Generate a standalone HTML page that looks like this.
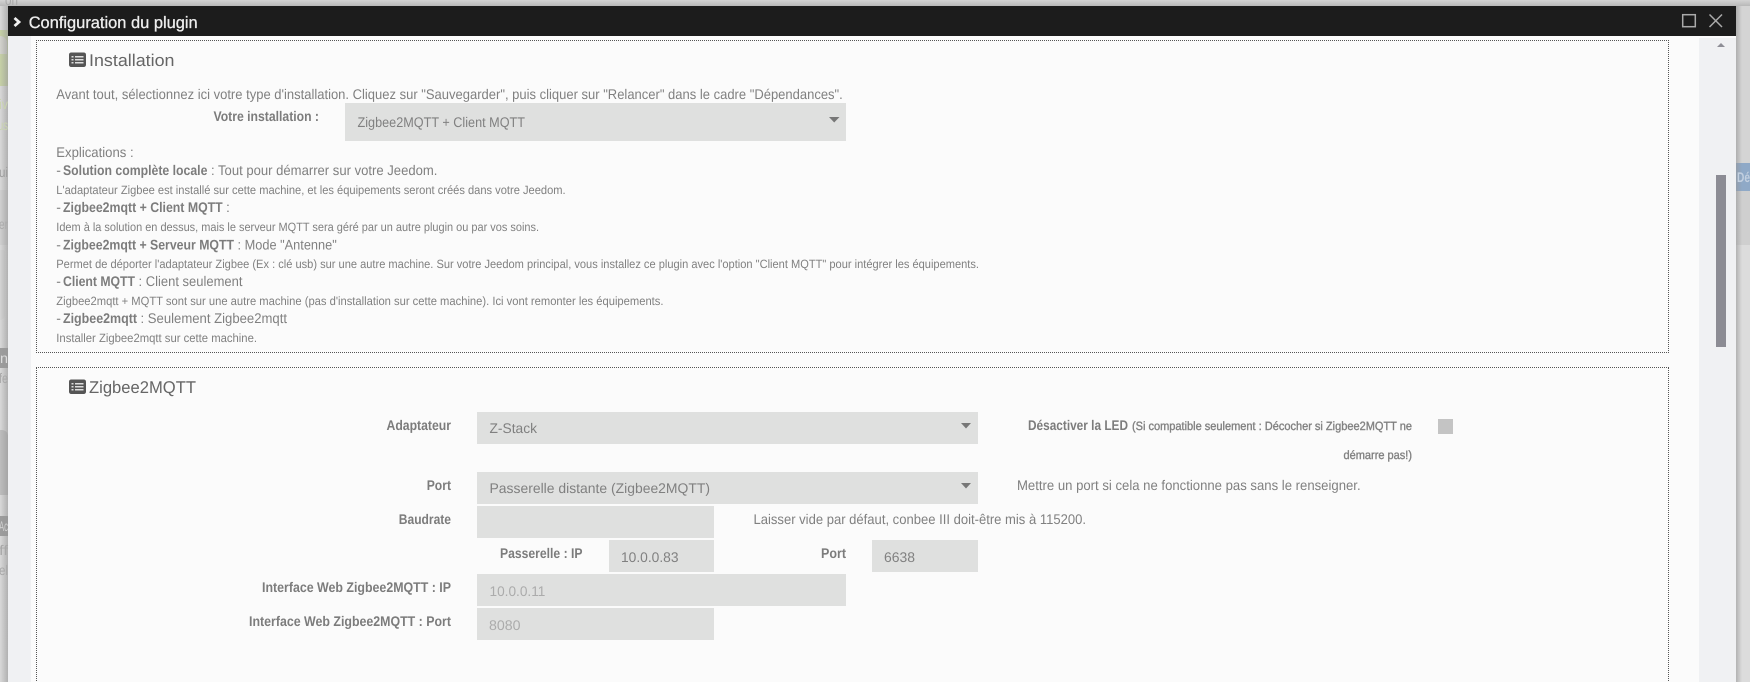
<!DOCTYPE html>
<html lang="fr"><head><meta charset="utf-8"><title>Configuration du plugin</title>
<style>
html,body{margin:0;padding:0;background:#d9d9d9;width:1750px;height:682px;overflow:hidden}
#w{position:relative;width:1750px;height:682px;overflow:hidden}
.a{position:absolute}
.box{position:absolute;left:36px;width:1631px;border:1px dotted #555;box-sizing:content-box}
svg{position:absolute;left:0;top:0;filter:blur(.3px)}
text{font-family:"Liberation Sans",sans-serif;font-size:14px;fill:#808080;text-rendering:geometricPrecision}
.b{font-weight:bold;fill:#7c7c7c}
.s{font-size:12px}
.h{font-size:17px;fill:#666}
</style></head><body>
<div id="w">
<div class="a" style="left:0;top:0;width:1750px;height:682px;background:#d9d9d9;overflow:hidden">
<div class="a" style="left:0;top:30px;width:8px;height:56px;background:#c6d1a6"></div>
<div class="a" style="left:0;top:36px;width:7px;height:18px;background:#d3d3cd;border-radius:0 7px 0 0"></div>
<div class="a" style="left:0;top:190px;width:8px;height:55px;background:#d0d0d0"></div>
<div class="a" style="left:0;top:250px;width:5px;height:70px;background:#d4d4d4;border-radius:0 8px 20px 0"></div>
<div class="a" style="left:0;top:348px;width:8px;height:20px;background:#9c9c9c"></div>
<div class="a" style="left:0;top:430px;width:8px;height:65px;background:#bdbdbd;border-radius:0 6px 0 0"></div>
<div class="a" style="left:0;top:516px;width:8px;height:20px;background:#9c9c9c"></div>
<div class="a" style="left:0;top:6px;width:8px;height:676px;background:linear-gradient(90deg,rgba(170,170,170,0),rgba(150,150,150,.6))"></div>
<div class="a" style="left:0;top:0;width:1750px;height:6px;background:linear-gradient(180deg,rgba(190,190,190,.2),rgba(170,170,170,.7))"></div>
<div class="a" style="left:1736px;top:6px;width:14px;height:157px;background:#d4d4d4"></div>
<div class="a" style="left:1736px;top:163px;width:14px;height:28px;background:#8fa9c7"></div>
<div class="a" style="left:1736px;top:191px;width:14px;height:54px;background:#cfcfcf"></div>
<div class="a" style="left:1736px;top:245px;width:14px;height:437px;background:#dcdcdc"></div>
<div class="a" style="left:1736px;top:6px;width:6px;height:676px;background:linear-gradient(90deg,rgba(150,150,150,.6),rgba(170,170,170,0))"></div>
</div>
<!-- dialog -->
<div class="a" style="left:8px;top:6px;width:1728px;height:676px;background:#f0f1f3"></div>
<div class="a" style="left:8px;top:6px;width:1728px;height:30px;background:#1c1c1c"></div>
<div class="a" style="left:31px;top:36px;width:1668px;height:646px;background:#fbfbfb"></div>
<div class="a" style="left:1699px;top:36px;width:37px;height:2px;background:#fbfbfb"></div>
<div class="a" style="left:1716px;top:175px;width:10px;height:172px;background:#8c8c94"></div>
<div class="box" style="top:40px;height:311px"></div>
<div class="box" style="top:367px;height:330px"></div>
<!-- fields -->
<div class="a" style="left:345px;top:103px;width:501px;height:38px;background:#dfe0df"></div>
<div class="a" style="left:477px;top:412px;width:501px;height:32px;background:#dfe0df"></div>
<div class="a" style="left:477px;top:472px;width:501px;height:32px;background:#dfe0df"></div>
<div class="a" style="left:477px;top:506px;width:237px;height:32px;background:#dfe0df"></div>
<div class="a" style="left:609px;top:540px;width:105px;height:32px;background:#dfe0df"></div>
<div class="a" style="left:872px;top:540px;width:106px;height:32px;background:#dfe0df"></div>
<div class="a" style="left:477px;top:574px;width:369px;height:32px;background:#dfe0df"></div>
<div class="a" style="left:477px;top:608px;width:237px;height:32px;background:#dfe0df"></div>
<div class="a" style="left:1438px;top:419px;width:15px;height:15px;background:#c4c4c4"></div>

<svg width="1750" height="682" viewBox="0 0 1750 682" xmlns="http://www.w3.org/2000/svg">
<text x="5" y="5" style="font-size:15px;fill:#aaa" textLength="13" lengthAdjust="spacingAndGlyphs">on</text>
<text x="-1" y="109" style="font-size:14px;fill:#c9d3ae" textLength="9" lengthAdjust="spacingAndGlyphs">iv</text>
<text x="-2" y="130" style="font-size:14px;fill:#c9d3ae" textLength="10" lengthAdjust="spacingAndGlyphs">us</text>
<text x="-1" y="177" style="font-size:14px;fill:#9d9d9d" textLength="9" lengthAdjust="spacingAndGlyphs">ui</text>
<text x="-1" y="229" style="font-size:14px;fill:#ababab" textLength="9" lengthAdjust="spacingAndGlyphs">er</text>
<text x="0" y="363" style="font-size:14px;fill:#dcdcdc" textLength="8" lengthAdjust="spacingAndGlyphs">n</text>
<text x="-1" y="383" style="font-size:14px;fill:#a8a8a8" textLength="9" lengthAdjust="spacingAndGlyphs">fe</text>
<text x="-1" y="531" style="font-size:14px;fill:#d0d0d0" textLength="9" lengthAdjust="spacingAndGlyphs">Ac</text>
<text x="-1" y="555" style="font-size:14px;fill:#a8a8a8" textLength="9" lengthAdjust="spacingAndGlyphs">ff</text>
<text x="-1" y="575" style="font-size:14px;fill:#a8a8a8" textLength="9" lengthAdjust="spacingAndGlyphs">el</text>
<text x="1737" y="182" style="font-size:14px;font-weight:bold;fill:#c3d0e0" textLength="13" lengthAdjust="spacingAndGlyphs">Dé</text>

<!-- title bar -->
<path d="M14.5 18 L19 22 L14.5 26" fill="none" stroke="#f0f0f0" stroke-width="2.8"/>
<text x="28.7" y="28" style="font-size:16.5px;fill:#eee;stroke:#eee;stroke-width:.3" textLength="169" lengthAdjust="spacingAndGlyphs">Configuration du plugin</text>
<rect x="1682.7" y="14.7" width="12.6" height="12" fill="none" stroke="#aaa" stroke-width="1.5"/>
<path d="M1709.5 14.5 L1722 27 M1722 14.5 L1709.5 27" fill="none" stroke="#aaa" stroke-width="1.5"/>
<path d="M1717 47 L1721 43 L1725 47 Z" fill="#8e8e96"/>

<!-- Installation -->
<rect x="69" y="52.5" width="17" height="14.5" rx="2.2" fill="#555"/>
<path d="M71.5 56h2v1.5h-2zM75 56h8.5v1.5H75zM71.5 59h2v1.5h-2zM75 59h8.5v1.5H75zM71.5 62h2v1.5h-2zM75 62h8.5v1.5H75z" fill="#ddd"/>
<text class="h" x="89" y="66" textLength="85.5" lengthAdjust="spacingAndGlyphs">Installation</text>
<text x="56.3" y="99" textLength="786.5" lengthAdjust="spacingAndGlyphs">Avant tout, sélectionnez ici votre type d'installation. Cliquez sur "Sauvegarder", puis cliquer sur "Relancer" dans le cadre "Dépendances".</text>
<text class="b" x="213.5" y="121" textLength="105.5" lengthAdjust="spacingAndGlyphs">Votre installation :</text>
<text x="357.5" y="127" textLength="167.5" lengthAdjust="spacingAndGlyphs">Zigbee2MQTT + Client MQTT</text>
<path d="M829 117 H839.5 L834.2 122.5 Z" fill="#777"/>

<text x="56.3" y="157" textLength="77.3" lengthAdjust="spacingAndGlyphs">Explications :</text>
<text x="56.3" y="175">-</text>
<text class="b" x="63" y="175" textLength="144.4" lengthAdjust="spacingAndGlyphs">Solution complète locale</text>
<text x="211" y="175" textLength="226.4" lengthAdjust="spacingAndGlyphs">: Tout pour démarrer sur votre Jeedom.</text>
<text class="s" x="56.3" y="194" textLength="509.3" lengthAdjust="spacingAndGlyphs">L'adaptateur Zigbee est installé sur cette machine, et les équipements seront créés dans votre Jeedom.</text>
<text x="56.3" y="212">-</text>
<text class="b" x="63" y="212" textLength="159.7" lengthAdjust="spacingAndGlyphs">Zigbee2mqtt + Client MQTT</text>
<text x="226" y="212">:</text>
<text class="s" x="56.3" y="231" textLength="482.7" lengthAdjust="spacingAndGlyphs">Idem à la solution en dessus, mais le serveur MQTT sera géré par un autre plugin ou par vos soins.</text>
<text x="56.3" y="249.5">-</text>
<text class="b" x="63" y="249.5" textLength="171" lengthAdjust="spacingAndGlyphs">Zigbee2mqtt + Serveur MQTT</text>
<text x="237.5" y="249.5" textLength="99.3" lengthAdjust="spacingAndGlyphs">: Mode "Antenne"</text>
<text class="s" x="56.3" y="268" textLength="922.7" lengthAdjust="spacingAndGlyphs">Permet de déporter l'adaptateur Zigbee (Ex : clé usb) sur une autre machine. Sur votre Jeedom principal, vous installez ce plugin avec l'option "Client MQTT" pour intégrer les équipements.</text>
<text x="56.3" y="286">-</text>
<text class="b" x="63" y="286" textLength="72" lengthAdjust="spacingAndGlyphs">Client MQTT</text>
<text x="138.5" y="286" textLength="104" lengthAdjust="spacingAndGlyphs">: Client seulement</text>
<text class="s" x="56.3" y="305" textLength="607.2" lengthAdjust="spacingAndGlyphs">Zigbee2mqtt + MQTT sont sur une autre machine (pas d'installation sur cette machine). Ici vont remonter les équipements.</text>
<text x="56.3" y="323">-</text>
<text class="b" x="63" y="323" textLength="74" lengthAdjust="spacingAndGlyphs">Zigbee2mqtt</text>
<text x="140.5" y="323" textLength="146.5" lengthAdjust="spacingAndGlyphs">: Seulement Zigbee2mqtt</text>
<text class="s" x="56.3" y="342" textLength="200.7" lengthAdjust="spacingAndGlyphs">Installer Zigbee2mqtt sur cette machine.</text>

<!-- Zigbee2MQTT -->
<rect x="69" y="379.5" width="17" height="14.5" rx="2.2" fill="#555"/>
<path d="M71.5 383h2v1.5h-2zM75 383h8.5v1.5H75zM71.5 386h2v1.5h-2zM75 386h8.5v1.5H75zM71.5 389h2v1.5h-2zM75 389h8.5v1.5H75z" fill="#ddd"/>
<text class="h" x="89" y="393" textLength="107" lengthAdjust="spacingAndGlyphs">Zigbee2MQTT</text>

<text class="b" x="386.5" y="430" textLength="64.5" lengthAdjust="spacingAndGlyphs">Adaptateur</text>
<text x="489.5" y="433" textLength="47.5" lengthAdjust="spacingAndGlyphs">Z-Stack</text>
<path d="M961 423 H971 L966 428.5 Z" fill="#777"/>
<text class="b" x="1028" y="430" textLength="100" lengthAdjust="spacingAndGlyphs">Désactiver la LED</text>
<text class="s b" x="1132" y="430" textLength="280" lengthAdjust="spacingAndGlyphs" style="font-weight:normal;stroke:#8a8a8a;stroke-width:.4">(Si compatible seulement : Décocher si Zigbee2MQTT ne</text>
<text class="s b" x="1343.5" y="459" textLength="68.5" lengthAdjust="spacingAndGlyphs" style="font-weight:normal;stroke:#8a8a8a;stroke-width:.4">démarre pas!)</text>

<text class="b" x="426.7" y="490" textLength="24.3" lengthAdjust="spacingAndGlyphs">Port</text>
<text x="489.5" y="493" textLength="220.5" lengthAdjust="spacingAndGlyphs">Passerelle distante (Zigbee2MQTT)</text>
<path d="M961 483 H971 L966 488.5 Z" fill="#777"/>
<text x="1017" y="490" textLength="343.6" lengthAdjust="spacingAndGlyphs">Mettre un port si cela ne fonctionne pas sans le renseigner.</text>

<text class="b" x="398.8" y="524" textLength="52.2" lengthAdjust="spacingAndGlyphs">Baudrate</text>
<text x="753.5" y="524" textLength="332.5" lengthAdjust="spacingAndGlyphs">Laisser vide par défaut, conbee III doit-être mis à 115200.</text>

<text class="b" x="500" y="558" textLength="82.5" lengthAdjust="spacingAndGlyphs">Passerelle : IP</text>
<text x="621" y="562" textLength="57.5" lengthAdjust="spacingAndGlyphs">10.0.0.83</text>
<text class="b" x="821" y="558" textLength="25" lengthAdjust="spacingAndGlyphs">Port</text>
<text x="884" y="562" textLength="31" lengthAdjust="spacingAndGlyphs">6638</text>

<text class="b" x="262" y="592" textLength="189" lengthAdjust="spacingAndGlyphs">Interface Web Zigbee2MQTT : IP</text>
<text x="489.5" y="596" textLength="55.9" lengthAdjust="spacingAndGlyphs" style="fill:#ababab">10.0.0.11</text>
<text class="b" x="249" y="626" textLength="202" lengthAdjust="spacingAndGlyphs">Interface Web Zigbee2MQTT : Port</text>
<text x="489" y="630" textLength="31.5" lengthAdjust="spacingAndGlyphs" style="fill:#ababab">8080</text>
</svg>
</div>
</body></html>
